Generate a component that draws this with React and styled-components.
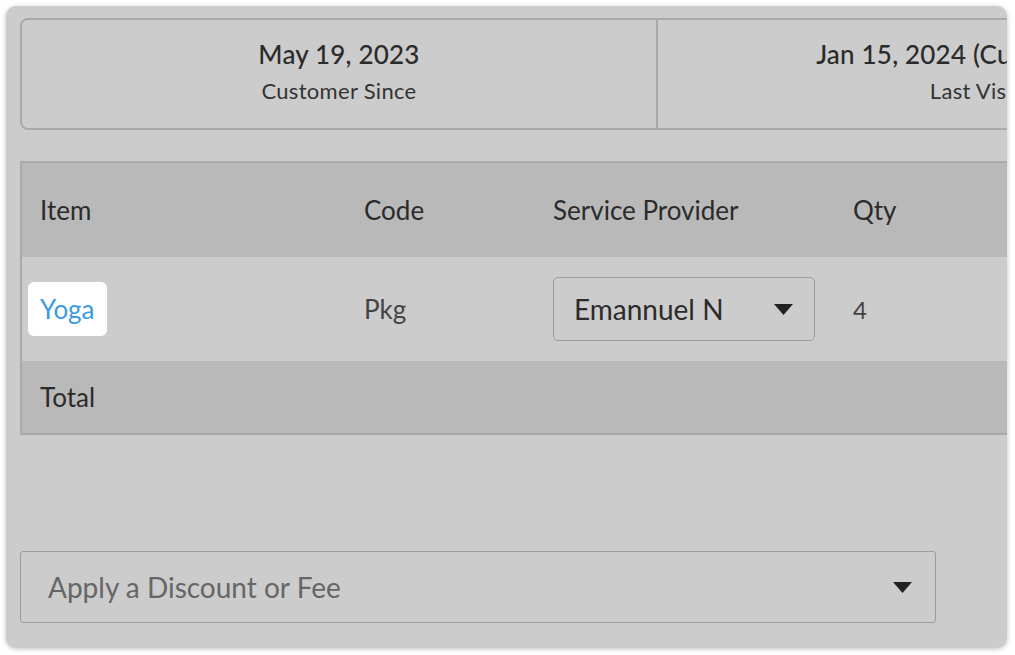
import React from 'react';
import styled, { createGlobalStyle } from 'styled-components';

const GlobalStyle = createGlobalStyle`
  html, body {
    margin: 0;
    padding: 0;
    background: #ffffff;
  }
  body {
    font-family: Lato, "Open Sans", "Noto Sans", sans-serif;
    color: #2b2b2b;
  }
`;

// Frame: dimmed card with rounded corners
const Frame = styled.div`
  margin: 6px;
  width: 1001px;
  height: 642px;
  box-sizing: border-box;
  border-radius: 10px;
  background: #cccccc;
  box-shadow: 0 1px 5px rgba(0, 0, 0, 0.25);
  overflow: hidden;
  padding: 12px 0 0 14px;
`;

const Content = styled.div`
  width: 1300px;
  display: flex;
  flex-direction: column;
`;

const Stats = styled.div`
  display: grid;
  grid-template-columns: 634px 636px;
  height: 112px;
  box-sizing: border-box;
  border: 2px solid #a9a9a9;
  border-radius: 8px;
`;

const StatCell = styled.div`
  display: flex;
  flex-direction: column;
  align-items: center;
  padding-top: 18px;
  border-left: ${p => (p.first ? 'none' : '2px solid #a9a9a9')};
`;

const StatValue = styled.div`
  font-size: 26px;
  font-weight: 500;
  line-height: 32px;
  color: #2b2b2b;
  letter-spacing: 0.2px;
  white-space: nowrap;
`;

const StatLabel = styled.div`
  margin-top: 8px;
  font-size: 22px;
  line-height: 26px;
  color: #333333;
  letter-spacing: 0.3px;
`;

const Table = styled.div`
  margin-top: 31px;
  border: 2px solid #a9a9a9;
  border-right: none;
  display: flex;
  flex-direction: column;
`;

const Row = styled.div`
  display: grid;
  grid-template-columns: 342px 189px 300px 1fr;
  align-items: center;
  height: ${p => p.h}px;
  background: ${p => (p.shade ? '#b9b9b9' : '#cccccc')};
  font-size: 27px;
  color: #2b2b2b;
`;

const Cell = styled.div`
  padding-left: ${p => (p.pad != null ? p.pad : 0)}px;
  color: ${p => (p.muted ? '#444444' : '#2b2b2b')};
  font-size: ${p => (p.small ? 24 : 26)}px;
`;

const ItemLink = styled.span`
  display: inline-flex;
  align-items: center;
  height: 54px;
  padding: 0 12px;
  background: #ffffff;
  border-radius: 6px;
  color: #3a9be0;
  font-size: 26px;
`;

const Select = styled.div`
  display: flex;
  align-items: center;
  justify-content: space-between;
  box-sizing: border-box;
  width: ${p => p.w}px;
  height: ${p => p.h}px;
  padding: 0 ${p => p.pr}px 0 ${p => p.pl}px;
  border: 1.5px solid #9c9c9c;
  border-radius: ${p => p.r}px;
  font-size: ${p => p.fs}px;
  color: ${p => p.color};
`;

const Caret = () => (
  <svg width="19" height="11" viewBox="0 0 19 11">
    <path d="M0 0 H19 L9.5 11 Z" fill="#222" />
  </svg>
);

const Discount = styled.div`
  margin-top: 116px;
`;

export default function App() {
  return (
    <>
      <GlobalStyle />
      <Frame>
        <Content>
          <Stats>
            <StatCell first>
              <StatValue>May 19, 2023</StatValue>
              <StatLabel>Customer Since</StatLabel>
            </StatCell>
            <StatCell>
              <StatValue>Jan 15, 2024 (Current Visit)</StatValue>
              <StatLabel>Last Visit</StatLabel>
            </StatCell>
          </Stats>

          <Table>
            <Row h={94} shade>
              <Cell pad={18}>Item</Cell>
              <Cell>Code</Cell>
              <Cell>Service Provider</Cell>
              <Cell>Qty</Cell>
            </Row>
            <Row h={104}>
              <Cell pad={6}>
                <ItemLink>Yoga</ItemLink>
              </Cell>
              <Cell muted>Pkg</Cell>
              <Cell>
                <Select w={262} h={64} pl={20} pr={21} r={5} fs={28} color="#2b2b2b">
                  Emannuel N
                  <Caret />
                </Select>
              </Cell>
              <Cell muted small>4</Cell>
            </Row>
            <Row h={72} shade>
              <Cell pad={18}>Total</Cell>
            </Row>
          </Table>

          <Discount>
            <Select w={916} h={72} pl={27} pr={23} r={3} fs={28} color="#666666">
              Apply a Discount or Fee
              <Caret />
            </Select>
          </Discount>
        </Content>
      </Frame>
    </>
  );
}
